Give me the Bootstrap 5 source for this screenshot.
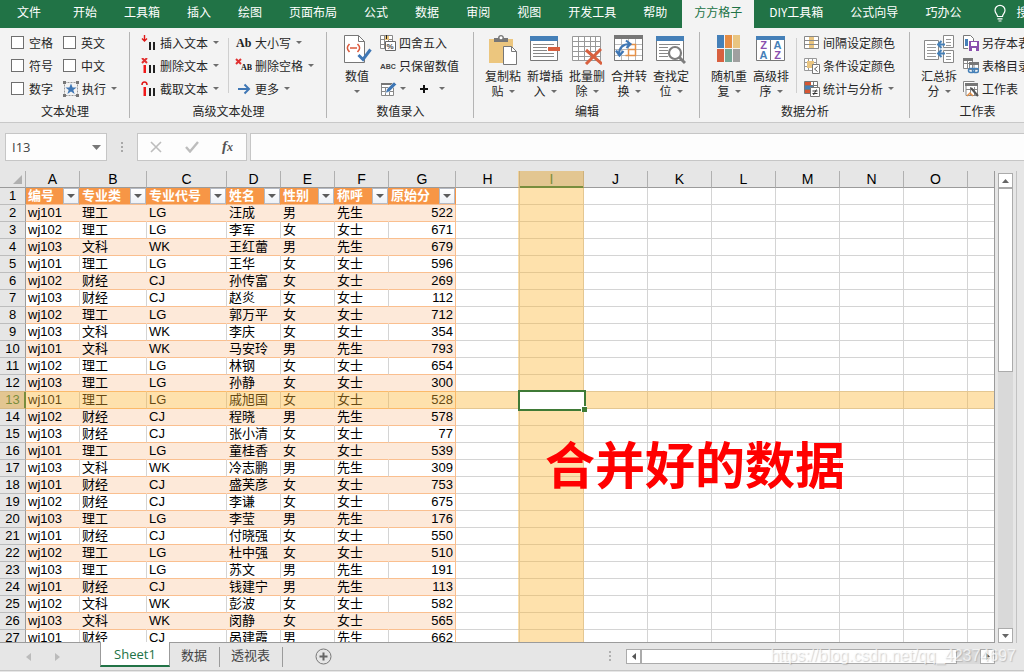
<!DOCTYPE html>
<html lang="zh-CN">
<head>
<meta charset="utf-8">
<meta name="viewport" content="width=device-width, initial-scale=1">
<title>Sheet1</title>
<link href="https://cdn.jsdelivr.net/npm/bootstrap@5.3.0/dist/css/bootstrap.min.css" rel="stylesheet">
<script src="https://cdn.jsdelivr.net/npm/bootstrap@5.3.0/dist/js/bootstrap.bundle.min.js"></script>
<style>
:root{--ui:"Noto Sans CJK SC",sans-serif;--green:#217346;--line:#9b9b9b}
body{font:12px/16px var(--ui);color:#262626;background:#e6e6e6}
button{font:inherit;color:inherit;background:none;border:0;padding:0;text-align:left;white-space:nowrap}
svg{flex:none;display:block}
/* ribbon tabs */
.tabs{background:var(--green);height:28px;padding-left:5px;column-gap:3px;white-space:nowrap}
.tabs a{color:#fff;text-decoration:none;padding:0 12px;line-height:24px;height:28px;flex:none}
.tabs a:first-child{margin-right:5px}
.tabs a.active{background:#f3f3f3;color:var(--green)}
/* ribbon body */
.ribbon{background:#f3f3f3;height:95px;border-bottom:1px solid #c8c8c8}
.grp{position:relative;flex:none;padding-top:3px}
.grp::after{content:"";position:absolute;right:0;top:4px;bottom:4px;width:1px;background:#b4b4b4}
.grp:last-child::after{display:none}
.tools{height:69px}
.caption{line-height:22px;text-align:center}
.stack{display:grid;grid-template-rows:repeat(3,23px);align-items:center;justify-items:start}
.stack button,.stack label{display:flex;align-items:center;white-space:nowrap}
.stack button>svg:first-child{margin-right:3px}
.caret{display:inline-block;width:0;height:0;border:3px solid transparent;border-top-color:#6d6d6d;border-bottom:0;margin-left:5px;vertical-align:3px}
.divider{width:1px;height:55px;background:#cfcfcf;margin-top:7px;flex:none}
.big{width:42px;display:flex;flex-direction:column;align-items:center;text-align:center;line-height:15px;padding-top:4px}
.big svg{margin-bottom:3px}
.tick{appearance:none;width:13px;height:13px;margin:0 5px 0 0;border:1px solid #6f6f6f;background:#fff}
/* formula bar */
.fbar{padding:10px 0 10px 5px}
.fbox{background:#fdfdfd;border:1px solid #c6c6c6;height:28px}
.namebox{width:102px}
.namebox input{width:80px;border:0;background:none;padding:0 0 0 6px;font:13px/26px "Open Sans",sans-serif;color:#444;outline:0}
.fbox button{width:36px;height:26px;display:flex;align-items:center;justify-content:center}
.formula{border-radius:0;outline:0;min-width:0;padding:0 6px}
/* sheet */
.sheet{flex:1 1 0;border-right:1px solid var(--line);border-bottom:1px solid var(--line);position:relative;overflow:hidden;min-width:0}
.cells{table-layout:fixed;width:100%;border-collapse:separate;border-spacing:0;font:13px/16px "Liberation Sans","Noto Sans CJK SC",sans-serif;color:#000;background:#fff}
.cells td,.cells th{height:17px;padding:0 2px;border:0 solid #d4d4d4;border-width:0 1px 1px 0;white-space:nowrap;overflow:hidden;font-weight:400}
.cells thead th{background:#e6e6e6;border-right-color:#b0b0b0;border-bottom-color:var(--line);text-align:center;font-size:14px}
.cells tbody th.rowno{background:#e6e6e6;border-right-color:var(--line);border-bottom-color:#bdbdbd;text-align:center;padding:0}
.cells thead th:last-child,.cells td:last-child{border-right:0}
.cells .dat{border-bottom-color:#fabf8f}
.cells .num{text-align:right;border-right-color:#fabf8f}
.cells .band .dat{background:#fde9d9;border-right-color:#fde9d9}
.cells .band .num{border-right-color:#fabf8f}
.cells th.fld{background:#f79646;border-right-color:#f79646;border-bottom-color:#fabf8f;color:#fff;font-weight:700;padding-right:0}
.filter{width:16px;height:16px;background:linear-gradient(#fff,#eef1f6);border:1px solid #b5bac4;flex:none;display:flex;align-items:center;justify-content:center}
.filter::after{content:"";border:4px solid transparent;border-top-color:#5c5c5c;border-bottom:0}
/* reading-guide bands through the selected cell */
.cells tr.now{position:relative}
.cells tr.now .rowno::after{content:"";position:absolute;inset:-1px 0 0 0;background:rgba(252,180,48,.4);pointer-events:none}
.cells tbody tr.now th.rowno{background:#d2d2d2;border-right-color:var(--green);box-shadow:inset -1px 0 0 var(--green);color:var(--green)}
.cells thead th.nowcol{background:#d2d2d2;color:var(--green);border-bottom-color:var(--green);box-shadow:inset 0 -1px 0 var(--green);position:relative;overflow:visible}
.nowcol::after{content:"";position:absolute;left:-2px;right:-1px;top:0;height:100vh;background:rgba(252,180,48,.4);pointer-events:none;z-index:1}
.cells td.cursor{position:relative;z-index:2;overflow:visible;background:#fff;border-color:#fff;box-shadow:0 0 0 2px #3f7a36}
.cursor::after{content:"";position:absolute;right:-4px;bottom:-4px;width:6px;height:6px;background:#3f7a36;border:solid #fff;border-width:1px 0 0 1px}
.note{position:absolute;left:545px;top:255px;font-size:50px;line-height:72px;font-weight:700;color:red;white-space:nowrap;z-index:3}
/* scroll bars */
.vbar{width:15px;margin:2px 3px 0;background:#d9d9d9;flex:none}
.sb{width:15px;height:15px;border:1px solid #ababab;background:#fff;display:flex;align-items:center;justify-content:center;flex:none}
.thumb{background:#fff;border:1px solid #ababab}
.vbar .thumb{height:184px}
.rail{width:8px;border-left:1px solid #c2c2c2;flex:none}
.foot{height:28px;border-bottom:1px solid #c6c6c6}
.hbar{width:369px;height:15px;background:#d9d9d9;margin:6px 29px 0 0}
.hbar .thumb{width:316px}
.sheets{font-size:13px;line-height:22px;color:#444}
.sheets button{height:24px}
.sheets .open{width:70px;margin-top:-1px;background:#fff;border:solid var(--line);border-width:0 1px;border-bottom:2px solid var(--green);color:var(--green);text-align:center;font-family:"Open Sans",sans-serif;height:25px;position:relative}
.sheets .alt{padding:0 13px 0 11px;position:relative}
.sheets .alt::after{content:"";position:absolute;right:0;top:4px;height:20px;width:1px;background:#9b9b9b}
.watermark{position:absolute;right:8px;bottom:4px;font:16px/24px "Liberation Sans",sans-serif;color:rgba(255,255,255,.7);text-shadow:1px 1px 1px rgba(120,120,120,.35);z-index:4}
</style>
</head>
<body class="vh-100 d-flex flex-column overflow-hidden position-relative">
<nav class="tabs d-flex overflow-hidden flex-shrink-0">
<a href="#">文件</a><a href="#">开始</a><a href="#">工具箱</a><a href="#">插入</a><a href="#">绘图</a><a href="#">页面布局</a><a href="#">公式</a><a href="#">数据</a><a href="#">审阅</a><a href="#">视图</a><a href="#">开发工具</a><a href="#">帮助</a><a href="#" class="active">方方格子</a><a href="#">DIY工具箱</a><a href="#">公式向导</a><a href="#">巧办公</a>
<a href="#" class="d-flex ps-3"><svg class="mt-1 me-2" width="16" height="18" viewBox="0 0 16 18" fill="none" stroke="#fff" stroke-width="1.2"><path d="M5.500 12.500c0-2.500-2.500-3-2.500-6.200a5 5 0 0 1 10 0c0 3.200-2.500 3.700-2.500 6.200zM5.500 14.800h5M6.500 17h3"/></svg>搜索</a>
</nav>

<div class="ribbon d-flex overflow-hidden flex-shrink-0">
 <section class="grp" style="width:130px">
  <div class="tools d-flex">
   <div class="stack" style="margin-left:11px;width:52px">
    <label><input type="checkbox" class="tick">空格</label>
    <label><input type="checkbox" class="tick">符号</label>
    <label><input type="checkbox" class="tick">数字</label>
   </div>
   <div class="stack">
    <label><input type="checkbox" class="tick">英文</label>
    <label><input type="checkbox" class="tick">中文</label>
    <button><svg width="16" height="16" viewBox="0 0 16 16"><path d="M1.500 1.500h13v13h-13z" fill="none" stroke="#999" stroke-dasharray="2 1"/><path d="M0 0h3v3H0zM13 0h3v3h-3zM0 13h3v3H0zM13 13h3v3h-3z" fill="#777"/><path d="M8 2.500l1.600 4h4L10.300 9l1.300 4L8 10.600 4.400 13l1.300-4-3.300-2.500h4z" fill="#3f77b5"/></svg>执行<i class="caret"></i></button>
   </div>
  </div>
  <div class="caption">文本处理</div>
 </section>

 <section class="grp" style="width:197px">
  <div class="tools d-flex">
   <div class="stack" style="margin-left:11px;width:87px">
    <button><svg width="16" height="16" viewBox="0 0 16 16"><path d="M3.500 0v6M1 3.500L3.500 6 6 3.500" fill="none" stroke="#e01818" stroke-width="1.400"/><path d="M8 7h2v8H8zM12 7h2v8h-2z" fill="#222"/></svg>插入文本<i class="caret"></i></button>
    <button><svg width="16" height="16" viewBox="0 0 16 16"><path d="M1 0l5 5M6 0L1 5" stroke="#e03030" stroke-width="2"/><path d="M2.500 7h2.500v8H2.500z" fill="#f01818"/><path d="M8 7h2v8H8zM12 7h2v8h-2z" fill="#222"/></svg>删除文本<i class="caret"></i></button>
    <button><svg width="16" height="16" viewBox="0 0 16 16"><path d="M1 4c0-4 5-4 5 0" fill="none" stroke="#e01818" stroke-width="1.500"/><path d="M2.500 6h2.500v9H2.500z" fill="#f01818"/><path d="M8 7h2v8H8zM12 7h2v8h-2z" fill="#222"/></svg>截取文本<i class="caret"></i></button>
   </div>
   <div class="divider"></div>
   <div class="stack" style="margin-left:6px">
    <button><svg width="17" height="14" viewBox="0 0 17 14"><text x="1" y="11" font-family="Liberation Serif" font-weight="700" font-size="12" fill="#222">Ab</text></svg>大小写<i class="caret"></i></button>
    <button><svg width="17" height="16" viewBox="0 0 17 16"><path d="M1 1l5 5M6 1L1 6" stroke="#e03030" stroke-width="2"/><text x="6" y="12" font-family="Liberation Serif" font-weight="700" font-size="8" fill="#111">AB</text></svg>删除空格<i class="caret"></i></button>
    <button><svg width="17" height="12" viewBox="0 0 17 12"><path d="M3 6h11M9.500 1.500L14 6l-4.500 4.500" fill="none" stroke="#3f77b5" stroke-width="2"/></svg>更多<i class="caret"></i></button>
   </div>
  </div>
  <div class="caption">高级文本处理</div>
 </section>

 <section class="grp" style="width:147px">
  <div class="tools d-flex">
   <button class="big" style="margin-left:9px"><svg width="30" height="30" viewBox="0 0 30 30"><path d="M2.500.5h14l6 6v21h-20z" fill="#fff" stroke="#777"/><path d="M16.500.5v6h6" fill="none" stroke="#777"/><path d="M7.500 9c-3 3-3 5 0 8M15.500 9c3 3 3 5 0 8M8 13h7" fill="none" stroke="#dc5a3c" stroke-width="1.700"/><path d="M16.500 20l4.500 4.500 7.500-10" fill="none" stroke="#3f77b5" stroke-width="3"/></svg><span>数值<br><i class="caret m-0"></i></span></button>
   <div class="stack" style="margin-left:2px">
    <button><svg width="16" height="16" viewBox="0 0 16 16"><path d="M.5.500h12v13H.5zM.5 4.500h12M.5 9.500h12M4.500.5v13M8.500.5v13" fill="#fff" stroke="#888"/><path d="M5 1h4v4H5z" fill="#e8c27a"/><path d="M6.500 0v4" stroke="#222"/><path d="M5.500 6.500h10v9h-10z" fill="#fff" stroke="#666"/><text x="6.500" y="14" font-size="8" font-family="Liberation Sans" font-weight="700" fill="#444">%</text></svg>四舍五入</button>
    <button><svg width="16" height="12" viewBox="0 0 16 12"><text x="0" y="9" font-family="Liberation Sans" font-weight="700" fill="#444" font-size="8">A<tspan font-size="7">BC</tspan></text></svg>只保留数值</button>
    <div class="d-flex align-items-center"><button aria-label="编辑"><svg width="17" height="16" viewBox="0 0 17 16"><path d="M1.500 2.500h12v12h-12zM1.500 6.500h12M1.500 10.500h12M5.500 6v8.500M9.500 6v8.500" fill="#fff" stroke="#888"/><path d="M1 2h13v2H1z" fill="#777"/><path d="M5.500 12L7 8 14 1l2.500 2.500L9.500 10.500z" fill="#3f77b5" stroke="#f3f3f3" stroke-width=".5"/></svg><i class="caret m-0"></i></button><button aria-label="加号" style="margin-left:13px"><svg class="m-0" width="10" height="10" viewBox="0 0 10 10"><path d="M5 1v8M1 5h8" stroke="#111" stroke-width="2"/></svg><i class="caret" style="margin-left:10px"></i></button></div>
   </div>
  </div>
  <div class="caption">数值录入</div>
 </section>

 <section class="grp" style="width:226px">
  <div class="tools d-flex" style="padding-left:8px">
   <button class="big"><svg width="30" height="30" viewBox="0 0 30 30"><path d="M1 4h24v24H1z" fill="#ecc67e"/><path d="M6 7V3h4c0-4 6-4 6 0h4v4z" fill="#777"/><circle cx="13" cy="2.800" r="1.500" fill="#fff"/><path d="M15.500 11.500h8l5 5v13h-13z" fill="#fff" stroke="#777"/><path d="M23.500 11.500v5h5" fill="none" stroke="#777"/></svg><span>复制粘<br>贴<i class="caret"></i></span></button>
   <button class="big"><svg width="30" height="30" viewBox="0 0 30 30"><path d="M.5 1.500h27v24H.5z" fill="#fff" stroke="#777"/><path d="M0 1h28v5H0z" fill="#4580b8"/><path d="M3 9.500h21M3 12.500h14M3 15.500h14M3 18.500h21M3 21.500h21" stroke="#888"/><path d="M18 12h12v4H18z" fill="#d8603f"/></svg><span>新增插<br>入<i class="caret"></i></span></button>
   <button class="big"><svg width="30" height="30" viewBox="0 0 30 30"><path d="M.5 1.500h28v24H.5zM.5 6.500h28M.5 11.500h28M.5 16.500h28M.5 21.500h28M6.500 1.500v24M12.500 1.500v24M18.500 1.500v24M23.500 1.500v24" fill="#fff" stroke="#999"/><path d="M14 15l16 14M29 14L14 29" stroke="#d8603f" stroke-width="3"/></svg><span>批量删<br>除<i class="caret"></i></span></button>
   <button class="big"><svg width="30" height="30" viewBox="0 0 30 30"><path d="M.5.500h28v25H.5zM.5 9.500h28M.5 14.500h28M.5 20.500h28M7.500 4v22M14.500 4v22M21.500 4v22" fill="#fff" stroke="#bbb"/><path d="M.5.500h28v25H.5z" fill="none" stroke="#777"/><path d="M0 0h29v4H0z" fill="#777"/><path d="M14.500 14.500h7v6h-10M21.500 14.500v-5h-5M21.500 9.500v11M14.500 14.500v6" fill="none" stroke="#e59148" stroke-width="1.500"/><path d="M5 20c0-8 4-11 11-11M12 5.500l4.500 3.500-4 4M2 15.500l3.500 5 4-4.500" fill="none" stroke="#3f77b5" stroke-width="2.200"/></svg><span>合并转<br>换<i class="caret"></i></span></button>
   <button class="big"><svg width="30" height="30" viewBox="0 0 30 30"><path d="M.5 1.500h27v24H.5z" fill="#fff" stroke="#777"/><path d="M0 1h28v5H0z" fill="#4580b8"/><path d="M3 9.500h21M3 12.500h9M3 15.500h9M3 18.500h9M3 21.500h9" stroke="#888"/><circle cx="19" cy="18" r="6" fill="#fff" stroke="#7d7d7d" stroke-width="2.200"/><path d="M23 22l6 6" stroke="#7d7d7d" stroke-width="3"/></svg><span>查找定<br>位<i class="caret"></i></span></button>
  </div>
  <div class="caption">编辑</div>
 </section>

 <section class="grp" style="width:210px">
  <div class="tools d-flex" style="padding-left:8px">
   <button class="big"><svg width="30" height="30" viewBox="0 0 30 30"><path d="M3 0h7v13H3z" fill="#4580b8"/><path d="M11 0h7v13h-7z" fill="#e68c43"/><path d="M19 0h7v13h-7z" fill="#e9c581"/><path d="M3 14h7v13H3z" fill="#d8603f"/><path d="M11 14h7v13h-7z" fill="#76a797"/><path d="M19 14h7v13h-7z" fill="#a0a0a0"/></svg><span>随机重<br>复<i class="caret"></i></span></button>
   <button class="big"><svg width="30" height="30" viewBox="0 0 30 30"><path d="M.5 1.500h28v24H.5zM14.500 5v21" fill="#fff" stroke="#777"/><path d="M0 1h29v4H0z" fill="#4580b8"/><g font-family="Liberation Sans" font-weight="700" font-size="11" text-anchor="middle"><text x="7.500" y="14" fill="#8a4fae">Z</text><text x="7.500" y="24" fill="#4580b8">A</text><text x="21.500" y="14" fill="#4580b8">A</text><text x="21.500" y="24" fill="#8a4fae">Z</text></g></svg><span>高级排<br>序<i class="caret"></i></span></button>
   <div class="divider" style="margin-left:4px"></div>
   <div class="stack" style="margin-left:7px">
    <button><svg width="16" height="16" viewBox="0 0 16 16"><path d="M.5 1.500h14v12H.5zM.5 5.500h14M.5 9.500h14M5.500 1.500v12M9.500 1.500v12" fill="#fff" stroke="#888"/><path d="M5 2h5v3H5zM5 10h5v3H5zM5 6h5v3H5z" fill="#e9c581"/></svg>间隔设定颜色</button>
    <button><svg width="16" height="16" viewBox="0 0 16 16"><path d="M.5.500h12v12H.5zM.5 4.500h12M.5 8.500h12M4.500.5v12M8.500.5v12" fill="#fff" stroke="#999"/><path d="M3 3h7v7H3z" fill="#e9c581"/><path d="M8.500 6.500h7v9h-7z" fill="#fff" stroke="#777"/><path d="M13.500 8.500L10.500 11l3 2.500" fill="none" stroke="#555"/></svg>条件设定颜色</button>
    <button><svg width="16" height="16" viewBox="0 0 16 16"><path d="M.5.500h13v12H.5zM.5 4.500h13M.5 8.500h13M9.500.5v12" fill="#fff" stroke="#777"/><path d="M1 1h6v3H1zM1 9h7v3H1z" fill="#d65532"/><path d="M1 5h8v3H1z" fill="#4580b8"/><path d="M6.500 6.500h9v9h-9z" fill="#fff" stroke="#777"/><path d="M8.500 10h5M8.500 12.500h5M12.500 8.500l-3 5.500" stroke="#333"/></svg>统计与分析<i class="caret"></i></button>
   </div>
  </div>
  <div class="caption">数据分析</div>
 </section>

 <section class="grp" style="width:135px">
  <div class="tools d-flex" style="padding-left:8px">
   <button class="big"><svg width="30" height="30" viewBox="0 0 30 30"><path d="M.5 5.500h14v19H.5zM19.500.5h10v12h-10zM19.500 15.500h10v12h-10z" fill="#fff" stroke="#888"/><path d="M3 9.500h9M3 12.500h9M3 15.500h9M3 18.500h9M3 21.500h9M22 4.500h5M22 7.500h5M22 10.500h5M22 18.500h5M22 21.500h5M22 24.500h5" stroke="#999"/><path d="M21 9.500h-7M17.500 6L14 9.500l3.500 3.500M21 18.500h-7M17.500 15L14 18.500l3.500 3.500" fill="none" stroke="#4580b8" stroke-width="2"/></svg><span>汇总拆<br>分<i class="caret"></i></span></button>
   <div class="stack" style="margin-left:3px">
    <button><svg width="16" height="16" viewBox="0 0 16 16"><path d="M5 13.500H.5V.5h7l3 3V7" fill="#fff" stroke="#777"/><path d="M2 4h3v7H2z" fill="#4580b8"/><path d="M6 6h10v10H6z" fill="#8a4fae"/><path d="M8 7h6v4H8zM9 13h4v3H9z" fill="#fff"/></svg>另存本表</button>
    <button><svg width="16" height="16" viewBox="0 0 16 16"><path d="M.5 1.500h9v9h-9zM.5 5.500h9M4.500 1.500v9M6.500 5.500h9v6h-9zM11 5.500v5" fill="#fff" stroke="#888"/><path d="M0 0h10v3H0zM6 4h10v3H6z" fill="#777"/><rect x="5.500" y="10.500" width="6" height="4" rx="2" fill="none" stroke="#4580b8" stroke-width="1.500"/><rect x="9.500" y="10.500" width="6" height="4" rx="2" fill="none" stroke="#4580b8" stroke-width="1.500"/></svg>表格目录</button>
    <button><svg width="16" height="16" viewBox="0 0 16 16"><path d="M.5 11V.5h11M3 3.500h11.500v11H3zM3 8.500h11M7.500 6v8M11.500 6v8" fill="#fff" stroke="#888"/><path d="M2 2h13v3H2z" fill="#777"/><path d="M8 7l7 8" stroke="#555" stroke-width="2"/><path d="M4 15l3-3 3 3" fill="none" stroke="#e59148" stroke-width="1.500"/></svg>工作表</button>
   </div>
  </div>
  <div class="caption">工作表</div>
 </section>
</div>

<div class="fbar d-flex flex-shrink-0">
 <div class="fbox namebox d-flex align-items-center"><input type="text" value="I13" aria-label="名称框"><button class="w-auto flex-grow-1" aria-label="名称列表"><svg width="9" height="5" viewBox="0 0 9 5"><path d="M0 0h9L4.500 5z" fill="#777"/></svg></button></div>
 <svg width="30" height="28" viewBox="0 0 30 28"><path d="M14 9h2v2h-2zM14 13h2v2h-2zM14 17h2v2h-2z" fill="#a8a8a8"/></svg>
 <div class="fbox d-flex">
  <button aria-label="取消"><svg width="12" height="12" viewBox="0 0 12 12"><path d="M1 1l10 10M11 1L1 11" stroke="#bdbdbd" stroke-width="1.600"/></svg></button>
  <button aria-label="输入"><svg width="14" height="12" viewBox="0 0 14 12"><path d="M1 6l4 4.500L13 1" fill="none" stroke="#bdbdbd" stroke-width="2.400"/></svg></button>
  <button aria-label="插入函数"><svg width="16" height="18" viewBox="0 0 16 18"><text x="2" y="13" font-family="Liberation Serif" font-style="italic" font-weight="700" font-size="15" fill="#555">f</text><text x="7" y="13" font-family="Liberation Serif" font-style="italic" font-weight="700" font-size="12" fill="#555">x</text></svg></button>
 </div>
 <input type="text" class="fbox formula flex-grow-1 border-end-0" style="margin-left:3px" aria-label="编辑栏">
</div>

<main class="d-flex flex-grow-1" style="min-height:0">
 <div class="sheet">
  <table class="cells"><colgroup id="cols"></colgroup><thead><tr id="letters"></tr></thead><tbody id="rows"></tbody></table>
  <div class="note">合并好的数据</div>
 </div>
 <div class="vbar d-flex flex-column">
  <button class="sb" aria-label="向上"><svg width="7" height="4" viewBox="0 0 7 4"><path d="M0 4h7L3.500 0z" fill="#666"/></svg></button>
  <div class="thumb"></div>
  <button class="sb mt-auto" aria-label="向下"><svg width="7" height="4" viewBox="0 0 7 4"><path d="M0 0h7L3.500 4z" fill="#666"/></svg></button>
 </div>
 <div class="rail"></div>
</main>

<footer class="foot d-flex flex-shrink-0">
 <div class="d-flex align-items-center" style="width:100px;padding-left:26px;gap:24px"><svg width="5" height="8" viewBox="0 0 5 8"><path d="M5 0v8L0 4z" fill="#bbb"/></svg><svg width="5" height="8" viewBox="0 0 5 8"><path d="M0 0v8l5-4z" fill="#bbb"/></svg></div>
 <div class="sheets d-flex"><button class="open">Sheet1</button><button class="alt">数据</button><button class="alt">透视表</button></div>
 <button class="ms-4 ps-2" aria-label="新工作表"><svg width="17" height="17" viewBox="0 0 17 17"><circle cx="8.500" cy="8.500" r="7.500" fill="none" stroke="#777"/><path d="M8.500 4.500v8M4.500 8.500h8" stroke="#666" stroke-width="2"/></svg></button>
 <svg class="ms-auto" width="32" height="28" viewBox="0 0 32 28"><path d="M15 8h2v2h-2zM15 12h2v2h-2zM15 16h2v2h-2z" fill="#b0b0b0"/></svg>
 <div class="hbar d-flex">
  <button class="sb" aria-label="向左"><svg width="4" height="7" viewBox="0 0 4 7"><path d="M4 0v7L0 3.500z" fill="#555"/></svg></button>
  <div class="thumb"></div>
  <button class="sb ms-auto" aria-label="向右"><svg width="4" height="7" viewBox="0 0 4 7"><path d="M0 0v7l4-3.500z" fill="#555"/></svg></button>
 </div>
</footer>
<div style="height:1px" class="flex-shrink-0"></div>
<div class="watermark">https://blog.csdn.net/qq_42374697</div>

<script>
const letters = 'ABCDEFGHIJKLMNO'.split('');
const widths = [26,54,67,80,54,54,54,67,64,64,64,64,64,64,64,64];
document.getElementById('cols').innerHTML = widths.map(w => `<col style="width:${w}px">`).join('') + '<col>';
document.getElementById('letters').innerHTML =
  '<th class="p-0"><svg width="25" height="16" viewBox="0 0 25 16"><path d="M22 4v9h-9z" fill="#b0b0b0"/></svg></th>' +
  letters.map(l => `<th${l === 'I' ? ' class="nowcol"' : ''}>${l}</th>`).join('') + '<th></th>';
const fields = ['编号','专业类','专业代号','姓名','性别','称呼','原始分'];
// major, name, score; a leading "*" on the name marks a man
const people = `理 *汪成 522|理 李军 671|文 *王红蕾 679|理 王华 596|财 孙传富 269|财 赵炎 112|理 郭万平 712|文 李庆 354|文 *马安玲 793|理 林钢 654|理 孙静 300|理 戚旭国 528|财 *程晓 578|财 张小清 77|理 童桂香 539|文 *冷志鹏 309|财 盛芙彦 753|财 李谦 675|理 *李莹 176|财 付晓强 550|理 杜中强 510|理 *苏文 191|财 *钱建宁 113|文 彭波 582|文 闵静 565|财 *呙建霞 662`.split('|');
const ids = '12312323123123131231231231';
const majors = {'理':['理工','LG'],'文':['文科','WK'],'财':['财经','CJ']};
const blanks = n => letters.slice(7).map(l => `<td${n === 13 && l === 'I' ? ' class="cursor"' : ''}></td>`).join('') + '<td></td>';
let html = '<tr><th class="rowno">1</th>' + fields.map(f =>
  `<th class="fld"><div class="d-flex justify-content-between"><span>${f}</span><button class="filter" aria-label="筛选${f}"></button></div></th>`).join('') + blanks(1) + '</tr>';
people.forEach((p, i) => {
  const n = i + 2, [m, who, score] = p.split(' '), man = who[0] === '*';
  const row = ['wj10' + ids[i], ...majors[m], who.replace('*', ''), man ? '男' : '女', man ? '先生' : '女士'];
  html += `<tr class="${n % 2 ? '' : 'band'}${n === 13 ? ' now' : ''}"><th class="rowno">${n}</th>` +
    row.map(c => `<td class="dat">${c}</td>`).join('') + `<td class="dat num">${score}</td>` + blanks(n) + '</tr>';
});
document.getElementById('rows').innerHTML = html;
</script>
</body>
</html>
